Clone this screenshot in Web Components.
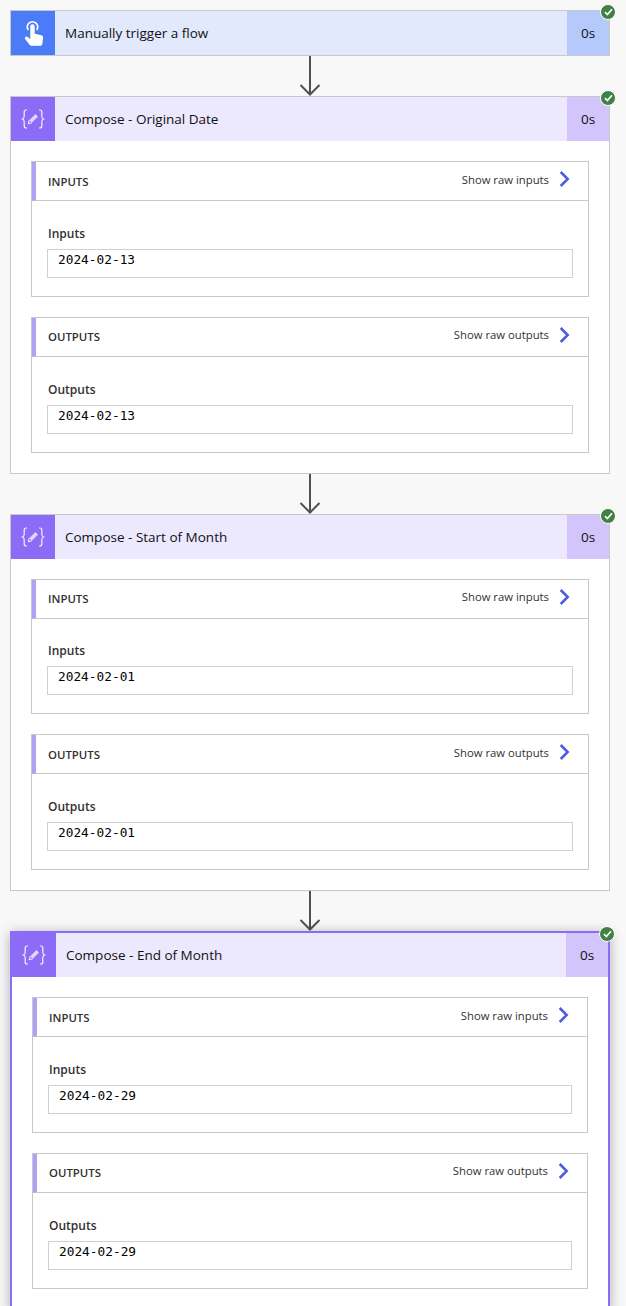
<!DOCTYPE html>
<html>
<head>
<meta charset="utf-8">
<title>Flow run</title>
<style>
  html, body { margin: 0; height: 1306px; overflow: hidden; }
  body {
    background: #f8f8f8;
    padding: 10px 16px 0 10px;
    box-sizing: border-box;
    font-family: "Open Sans", "Liberation Sans", sans-serif;
    color: #111;
  }
</style>
</head>
<body>
  <flow-card heading="Manually trigger a flow" time="0s" kind="trigger"></flow-card>
  <flow-arrow></flow-arrow>
  <flow-card heading="Compose - Original Date" time="0s">
    <io-section label="INPUTS" raw="Show raw inputs" field="Inputs" value="2024-02-13"></io-section>
    <io-section label="OUTPUTS" raw="Show raw outputs" field="Outputs" value="2024-02-13"></io-section>
  </flow-card>
  <flow-arrow></flow-arrow>
  <flow-card heading="Compose - Start of Month" time="0s">
    <io-section label="INPUTS" raw="Show raw inputs" field="Inputs" value="2024-02-01"></io-section>
    <io-section label="OUTPUTS" raw="Show raw outputs" field="Outputs" value="2024-02-01"></io-section>
  </flow-card>
  <flow-arrow></flow-arrow>
  <flow-card heading="Compose - End of Month" time="0s" selected>
    <io-section label="INPUTS" raw="Show raw inputs" field="Inputs" value="2024-02-29"></io-section>
    <io-section label="OUTPUTS" raw="Show raw outputs" field="Outputs" value="2024-02-29"></io-section>
  </flow-card>

<script>
const ICONS = {
  trigger: `<svg width="44" height="44" viewBox="0 0 44 44" fill="none">
      <path d="M17.2 19a5.2 5.2 0 1 1 8.6 0" stroke="#fff" stroke-width="1.8"/>
      <path fill="#fff" d="M19.3 15.5a2.2 2.2 0 0 1 4.4 0v7.2l6.6 1.6c1.2.3 1.9 1.3 1.8 2.5l-.8 6.2c-.1 1-.9 1.7-1.9 1.7H20.3c-.7 0-1.3-.3-1.7-.9l-4.4-5.5c-.6-.8-.5-1.8.2-2.4.7-.6 1.7-.5 2.4.1l2.5 2.3z"/>
    </svg>`,
  compose: `<svg width="44" height="44" viewBox="0 0 44 44" fill="none">
      <path d="M16 13h-.8c-1.3 0-2 .7-2 2v4.2c0 1.3-.6 2.3-1.8 2.8 1.2.5 1.8 1.5 1.8 2.8V29c0 1.3.7 2 2 2h.8M28 13h.8c1.3 0 2 .7 2 2v4.2c0 1.3.6 2.3 1.8 2.8-1.2.5-1.8 1.5-1.8 2.8V29c0 1.3-.7 2-2 2H28" stroke="#fff" stroke-width="1.2" opacity=".9"/>
      <path d="M25.3 18.7l-5.8 5.8" stroke="#fff" stroke-width="3.6" opacity=".72"/>
      <path d="M24.1 17.5l2.4 2.4M18.2 23.2l-.9 3.5 3.5-.9" stroke="#fff" stroke-width="1" opacity=".95"/>
    </svg>`
};

class FlowCard extends HTMLElement {
  connectedCallback() {
    const kind = this.getAttribute('kind') || 'compose';
    this.attachShadow({ mode: 'open' });
    this.shadowRoot.innerHTML = `
      <style>
        :host {
          display: block;
          position: relative;
          width: 600px;
          box-sizing: border-box;
          border: 1px solid #c8c8c8;
          background: #fff;
          --tone: #8c6cf7;
          --soft: #ece8fd;
          --mid: #d2c5fb;
        }
        :host([kind="trigger"]) { --tone: #4a7cf7; --soft: #e2e9fd; --mid: #b5c9fb; }
        :host([selected]) {
          border: 2px solid #8c6cf7;
          box-shadow: 0 2px 12px rgba(0, 0, 0, .3);
        }
        header { display: flex; height: 44px; background: var(--soft); align-items: stretch; }
        .icon { width: 44px; background: var(--tone); flex: none; }
        .icon svg { display: block; }
        .title { flex: 1; padding-left: 10px; font-size: 13.5px; line-height: 45px; }
        .time { width: 42px; flex: none; background: var(--mid); text-align: center; font-size: 13.5px; line-height: 45px; }
        .body { display: flex; flex-direction: column; gap: 20px; padding: 20px; }
        .body.empty { display: none; }
        .badge {
          position: absolute; top: -7px; right: -7px;
          width: 14px; height: 14px;
          border: 1px solid #fff; border-radius: 50%;
          background: #428046;
          display: flex; align-items: center; justify-content: center;
        }
      </style>
      <header>
        <div class="icon">${ICONS[kind] || ICONS.compose}</div>
        <div class="title">${this.getAttribute('heading')}</div>
        <div class="time">${this.getAttribute('time')}</div>
      </header>
      <div class="body ${this.children.length ? '' : 'empty'}"><slot></slot></div>
      <div class="badge">
        <svg width="9" height="8" viewBox="0 0 9 8" fill="none"><path d="M1 4.2l2.4 2.3L8 1.3" stroke="#fff" stroke-width="1.6"/></svg>
      </div>`;
  }
}

class FlowArrow extends HTMLElement {
  connectedCallback() {
    this.attachShadow({ mode: 'open' });
    this.shadowRoot.innerHTML = `
      <style>
        :host { display: flex; justify-content: center; width: 600px; height: 40px; }
        svg { display: block; }
      </style>
      <svg width="22" height="40" viewBox="0 0 22 40" fill="none">
        <path d="M11 0v38M1.5 29l9.5 9.5L20.5 29" stroke="#505050" stroke-width="2"/>
      </svg>`;
  }
}

class IoSection extends HTMLElement {
  connectedCallback() {
    this.attachShadow({ mode: 'open' });
    this.shadowRoot.innerHTML = `
      <style>
        :host {
          display: block;
          box-sizing: border-box;
          height: 135.75px;
          border: 1px solid #c8c8c8;
          background: #fff;
          color: #323130;
          font-size: 11.3px;
        }
        .head {
          display: flex; align-items: center;
          box-sizing: border-box;
          height: 39px;
          border-bottom: 1px solid #c8c8c8;
          border-left: 4px solid #b0a0f6;
          padding: 0 18px 2px 12px;
        }
        .head b { font-weight: 600; font-size: 11.4px; flex: 1; margin-top: 2px; }
        .raw { margin: -2px 10px 0 0; }
        .head svg { margin-top: -2px; }
        .content { padding: 20.75px 15px 0; }
        .field { font-weight: 600; font-size: 12px; line-height: 24px; padding-left: 1px; margin-bottom: 3px; }
        .value {
          box-sizing: border-box;
          height: 29px;
          border: 1px solid #d0d0d0;
          padding-left: 10px;
          font: 12.8px/20px "DejaVu Sans Mono", monospace;
          color: #000;
        }
      </style>
      <div class="head">
        <b>${this.getAttribute('label')}</b>
        <span class="raw">${this.getAttribute('raw')}</span>
        <svg width="11" height="16" viewBox="0 0 11 16" fill="none"><path d="M1.7 1l7 7-7 7" stroke="#4a5ce0" stroke-width="2.5"/></svg>
      </div>
      <div class="content">
        <div class="field">${this.getAttribute('field')}</div>
        <div class="value">${this.getAttribute('value')}</div>
      </div>`;
  }
}

customElements.define('flow-card', FlowCard);
customElements.define('flow-arrow', FlowArrow);
customElements.define('io-section', IoSection);
</script>
</body>
</html>
